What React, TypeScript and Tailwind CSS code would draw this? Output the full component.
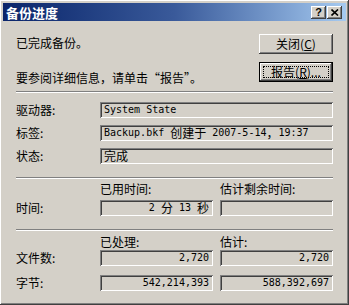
import React from 'react';

const raised =
  'shadow-[inset_-1px_-1px_#404040,inset_1px_1px_#ffffff,inset_-2px_-2px_#808080,inset_2px_2px_#d4d0c8]';
const sunken =
  'shadow-[inset_1px_1px_#808080,inset_-1px_-1px_#ffffff,inset_2px_2px_#404040,inset_-2px_-2px_#d4d0c8]';

const Separator = ({ className = '' }: { className?: string }) => (
  <div className={`h-[2px] border-t border-[#808080] border-b border-b-white ${className}`} />
);

const Field = ({
  children,
  right = false,
  className = '',
}: {
  children?: React.ReactNode;
  right?: boolean;
  className?: string;
}) => (
  <div
    className={`h-[16px] bg-[#d4d0c8] ${sunken} flex items-center px-[4px] text-[10px] leading-none whitespace-nowrap ${
      right ? 'justify-end' : 'justify-start'
    } ${className}`}
    style={{ fontFamily: '"DejaVu Sans Mono", "Noto Sans CJK SC", monospace' }}
  >
    {children}
  </div>
);

const Cjk = ({ children }: { children: React.ReactNode }) => (
  <span className="text-[12px]" style={{ fontFamily: '"Noto Sans CJK SC", sans-serif' }}>
    {children}
  </span>
);

export default function App() {
  return (
    <div
      className={`w-[349px] h-[305px] bg-[#d4d0c8] p-[3px] flex flex-col text-black text-[12px] leading-[16px] ${raised}`}
      style={{ fontFamily: '"Noto Sans CJK SC", "Liberation Sans", sans-serif' }}
    >
      {/* title bar */}
      <div className="h-[18px] flex items-center justify-between bg-gradient-to-r from-[#0a246a] via-[#3a5a9a] to-[#a6caf0] pl-[3px] pr-[4px]">
        <span className="text-white font-bold text-[13px] leading-none">备份进度</span>
        <div className="flex gap-[1px]">
          <div
            className={`w-[15px] h-[13px] bg-[#d4d0c8] ${raised} flex items-center justify-center text-[11px] font-bold leading-none`}
            style={{ fontFamily: '"Liberation Sans", sans-serif' }}
          >
            ?
          </div>
          <div className={`w-[15px] h-[13px] bg-[#d4d0c8] ${raised} flex items-center justify-center`}>
            <svg width="8" height="7" viewBox="0 0 8 7">
              <path d="M0.5 0.5 L7 6.5 M7 0.5 L0.5 6.5" stroke="#000" strokeWidth="1.6" />
            </svg>
          </div>
        </div>
      </div>

      <div className="px-[13px] flex flex-col">
        {/* top rows */}
        <div className="h-[61px] flex justify-between">
          <div className="flex flex-col">
            <p className="mt-[14px]">已完成备份。</p>
            <p className="mt-[19px]">要参阅详细信息，请单击“报告”。</p>
          </div>
          <div className="flex flex-col">
            <button className={`mt-[13px] w-[74px] h-[20px] bg-[#d4d0c8] ${raised} flex items-center justify-center leading-none`}>
              关闭(<span className="underline">C</span>)
            </button>
            <button className="mt-[8px] w-[74px] h-[20px] bg-[#d4d0c8] border border-black p-0">
              <div className={`w-full h-full ${raised} p-[3px]`}>
                <div className="w-full h-full border border-dotted border-black flex items-center justify-center leading-none">
                  报告(<span className="underline">R</span>)...
                </div>
              </div>
            </button>
          </div>
        </div>

        <Separator className="mt-[9px]" />

        {/* info rows */}
        <div className="mt-[9px] grid grid-cols-[84px_1fr] gap-y-[7px] items-center">
          <span>驱动器:</span>
          <Field>System State</Field>
          <span>标签:</span>
          <Field>
            Backup.bkf&nbsp;<Cjk>创建于</Cjk>&nbsp;2007-5-14<Cjk>，</Cjk>19:37
          </Field>
          <span>状态:</span>
          <Field>
            <Cjk>完成</Cjk>
          </Field>
        </div>

        <Separator className="mt-[13px]" />

        {/* time */}
        <div className="mt-[2px] grid grid-cols-[77px_113px_113px] gap-x-[7px] items-center">
          <span />
          <span>已用时间:</span>
          <span>估计剩余时间:</span>
          <span className="mt-[3px]">时间:</span>
          <Field right className="mt-[3px]">
            2&nbsp;<Cjk>分</Cjk>&nbsp;13&nbsp;<Cjk>秒</Cjk>
          </Field>
          <Field className="mt-[3px]" />
        </div>

        <Separator className="mt-[13px]" />

        {/* counts */}
        <div className="mt-[3px] grid grid-cols-[77px_113px_113px] gap-x-[7px] items-center">
          <span />
          <span>已处理:</span>
          <span>估计:</span>
          <span>文件数:</span>
          <Field right>2,720</Field>
          <Field right>2,720</Field>
          <span className="mt-[9px]">字节:</span>
          <Field right className="mt-[9px]">542,214,393</Field>
          <Field right className="mt-[9px]">588,392,697</Field>
        </div>
      </div>
    </div>
  );
}
